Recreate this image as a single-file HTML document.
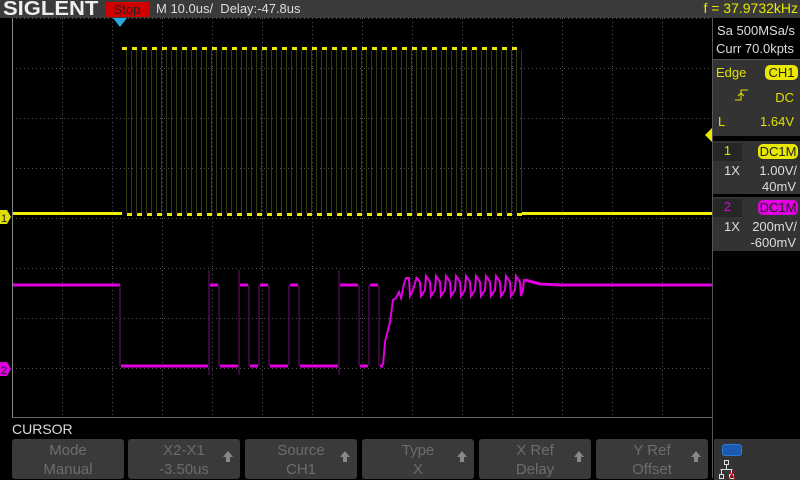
<!DOCTYPE html><html><head><style>
body{margin:0;background:#000;width:800px;height:480px;overflow:hidden;font-family:"Liberation Sans",sans-serif;position:relative}
.top{position:absolute;left:0;top:0;width:800px;height:18px;background:#3a3a3a}
.logo{position:absolute;left:3px;top:-2px;font:bold 20px "Liberation Sans";color:#eee;transform:scaleX(1.1);transform-origin:left}
.stop{position:absolute;left:105px;top:2px;width:44px;height:15px;background:#d00000;color:#222;font-size:13px;line-height:15px;text-align:center}
.tb{position:absolute;left:156px;top:1px;color:#ddd;font-size:13px}
.freq{position:absolute;right:2px;top:0;color:#e8e800;font-size:14px}
.side{position:absolute;left:712px;top:18px;width:88px;height:460px;background:#000;border-left:1px solid #555}
.sb{position:absolute;left:713px;width:87px;background:#333;color:#ddd;font-size:13px}
.tag{position:absolute;border-radius:5px;font-size:13px;text-align:center;line-height:15px;color:#222}
.btn{position:absolute;top:439px;height:40px;width:112px;background:#3a3a3a;border-radius:3px;color:#6c6c6c;font-size:15px;text-align:center;line-height:19px;padding-top:2px;box-sizing:border-box}
.ar{position:absolute;right:7px;top:12px;width:0;height:0;border-left:5px solid transparent;border-right:5px solid transparent;border-bottom:6px solid #888}
.ar:after{content:"";position:absolute;left:-2px;top:6px;width:4px;height:5px;background:#888}
</style></head><body>
<div class="top"><div class="logo">SIGLENT</div><div class="stop">Stop</div><div class="tb">M 10.0us/&nbsp; Delay:-47.8us</div><div class="freq">f = 37.9732kHz</div></div>
<svg style="position:absolute;left:0;top:0" width="800" height="480">
<defs>
<pattern id="yp" x="122" y="0" width="10" height="480" patternUnits="userSpaceOnUse">
<rect x="0" y="47" width="5" height="3" fill="#e8e800"/><rect x="5" y="213" width="5" height="3" fill="#e8e800"/>
<rect x="4" y="50" width="1" height="163" fill="#3a3a0c"/><rect x="9" y="50" width="1" height="163" fill="#3a3a0c"/>
</pattern>
<pattern id="gv" x="12" y="18" width="50" height="4" patternUnits="userSpaceOnUse"><rect x="0" y="0" width="1" height="1" fill="#555"/></pattern>
<pattern id="gh" x="12" y="18" width="4" height="50" patternUnits="userSpaceOnUse"><rect x="0" y="0" width="1" height="1" fill="#555"/></pattern>
</defs>
<rect x="12" y="18" width="700" height="400" fill="url(#gv)"/>
<rect x="12" y="18" width="700" height="400" fill="url(#gh)"/>
<rect x="12" y="18" width="1" height="400" fill="#888"/>
<rect x="12" y="417" width="700" height="1" fill="#666"/>
<rect x="122" y="44" width="400" height="175" fill="url(#yp)"/>
<rect x="13" y="212" width="109" height="3" fill="#f0f000"/>
<rect x="522" y="212" width="190" height="3" fill="#f0f000"/>
<polygon points="113,18 127,18 120,27" fill="#2aa8e0"/>
<polygon points="0,210 7,210 11,217 7,224 0,224" fill="#e0e000"/><text x="1" y="222" font-size="11" fill="#222" font-family="Liberation Sans">1</text>
<polygon points="0,362 7,362 11,369 7,376 0,376" fill="#e000e0"/><text x="1" y="374" font-size="11" fill="#222" font-family="Liberation Sans">2</text>
<polygon points="712,128 705,135 712,142" fill="#e8e800"/>
<g stroke="#e000e0" stroke-width="3" fill="none">
<polyline points="13,285 120,285"/>
<polyline points="121,366 208,366"/><polyline points="210,285 218,285"/><polyline points="220,366 238,366"/><polyline points="240,285 248,285"/><polyline points="250,366 258,366"/><polyline points="260,285 268,285"/><polyline points="270,366 288,366"/><polyline points="290,285 298,285"/><polyline points="300,366 338,366"/><polyline points="340,285 358,285"/><polyline points="360,366 368,366"/><polyline points="370,285 378,285"/><polyline points="380,366 383,366"/>
<polyline stroke-width="2" points="383,365 385,342 390,322 393,300 396,298 399,292 401,298 404,284 406,278 409,278 410,296 413,290 415,283 417,277"/>
<polyline stroke-width="2" points="416,277 420,282 421,296 425,290 426,276 430,282 431,296 435,290 436,276 440,282 441,296 445,290 446,276 450,282 451,296 455,290 456,276 460,282 461,296 465,290 466,276 470,282 471,296 475,290 476,276 480,282 481,296 485,290 486,276 490,282 491,296 495,290 496,276 500,282 501,296 505,290 506,276 510,282 511,296 515,290 516,276 520,282 521,296 523,290 524,279"/>
<polyline points="525,280 540,284 560,285 712,285"/>
</g>
<g stroke="#701070" stroke-width="1"><line x1="120" y1="285" x2="120" y2="366"/><line x1="209" y1="270" x2="209" y2="375"/><line x1="219" y1="285" x2="219" y2="366"/><line x1="239" y1="270" x2="239" y2="375"/><line x1="249" y1="285" x2="249" y2="366"/><line x1="259" y1="285" x2="259" y2="366"/><line x1="269" y1="285" x2="269" y2="366"/><line x1="289" y1="285" x2="289" y2="366"/><line x1="299" y1="285" x2="299" y2="366"/><line x1="339" y1="270" x2="339" y2="375"/><line x1="359" y1="285" x2="359" y2="366"/><line x1="369" y1="285" x2="369" y2="366"/><line x1="379" y1="285" x2="379" y2="366"/></g>
</svg>
<div class="side"></div>
<div class="sb" style="top:19px;height:40px;background:#000;border-bottom:1px solid #555"><div style="position:absolute;left:4px;top:4px">Sa 500MSa/s</div><div style="position:absolute;left:3px;top:22px">Curr 70.0kpts</div></div>
<div class="sb" style="top:60px;height:76px;color:#e0e000"><div style="position:absolute;left:3px;top:5px">Edge</div><div class="tag" style="left:52px;top:5px;width:33px;background:#e8e800">CH1</div>
<svg style="position:absolute;left:22px;top:28px" width="14" height="14"><path d="M0 12H6V2H13M3 8L6 5L9 8" stroke="#e0e000" fill="none" stroke-width="1"/></svg>
<div style="position:absolute;right:6px;top:30px">DC</div><div style="position:absolute;left:5px;top:54px">L</div><div style="position:absolute;right:6px;top:54px">1.64V</div></div>
<div class="sb" style="top:141px;height:53px"><div style="position:absolute;left:0;top:2px;width:29px;height:18px;background:#262626;color:#e0e000;text-align:center">1</div><div class="tag" style="left:45px;top:3px;width:40px;background:#e8e800">DC1M</div><div style="position:absolute;left:11px;top:22px">1X</div><div style="position:absolute;right:3px;top:22px">1.00V/</div><div style="position:absolute;right:4px;top:38px">40mV</div></div>
<div class="sb" style="top:197px;height:54px"><div style="position:absolute;left:0;top:2px;width:29px;height:18px;background:#262626;color:#e000e0;text-align:center">2</div><div class="tag" style="left:45px;top:3px;width:40px;background:#e000e0">DC1M</div><div style="position:absolute;left:11px;top:22px">1X</div><div style="position:absolute;right:3px;top:22px">200mV/</div><div style="position:absolute;right:4px;top:38px">-600mV</div></div>
<div style="position:absolute;left:12px;top:421px;color:#ddd;font-size:14px">CURSOR</div>
<div class="btn" style="left:12px">Mode<br>Manual</div>
<div class="btn" style="left:128px">X2-X1<br>-3.50us<div class="ar"></div></div>
<div class="btn" style="left:245px">Source<br>CH1<div class="ar"></div></div>
<div class="btn" style="left:362px">Type<br>X<div class="ar"></div></div>
<div class="btn" style="left:479px">X Ref<br>Delay<div class="ar"></div></div>
<div class="btn" style="left:596px">Y Ref<br>Offset<div class="ar"></div></div>
<div style="position:absolute;left:714px;top:439px;width:86px;height:41px;background:#333"></div>
<div style="position:absolute;left:722px;top:444px;width:18px;height:10px;border:1px solid #2a7ad0;background:#1a5ab0;border-radius:3px"></div>
<svg style="position:absolute;left:718px;top:460px" width="20" height="20"><g stroke="#ddd" fill="none" stroke-width="1"><rect x="6.5" y="0.5" width="4" height="4"/><line x1="8.5" y1="4" x2="8.5" y2="9"/><line x1="2.5" y1="9.5" x2="14.5" y2="9.5"/><line x1="3.5" y1="9" x2="3.5" y2="14"/><rect x="1.5" y="14.5" width="4" height="4"/><line x1="13.5" y1="9" x2="13.5" y2="14"/><rect x="11.5" y="14.5" width="4" height="4"/></g><path d="M11 11L17 19M17 11L11 19" stroke="#e00" stroke-width="1"/></svg>
</body></html>
